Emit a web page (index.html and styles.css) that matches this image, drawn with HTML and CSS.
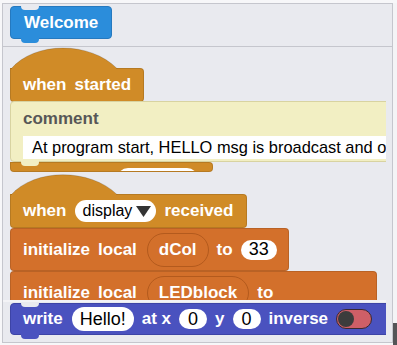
FILE: index.html
```html
<!DOCTYPE html>
<html lang="en">
<head>
    <meta charset="UTF-8">
    <title>Blocks</title>
    <link rel="stylesheet" href="styles.css">
</head>
<body>
    <div class="page">
        <div class="frame">
            <div class="header">
                <div class="block welcome">Welcome</div>
            </div>
            <div class="workspace">
                <div class="stack first">
                    <svg class="cap" width="108" height="22" viewBox="0 0 108 22"><path d="M0.5,22.5 C24,-6 80,-6 107,21.5 L108,22.5 Z" fill="#d08b27" stroke="rgba(0,0,0,0.15)" stroke-width="1"/></svg>
                    <div class="block event hat-body started">
                        <span>when</span>
                        <span>started</span>
                    </div>
                    <div class="comment">
                        <div class="comment-title">comment</div>
                        <div class="comment-text">At program start, HELLO msg is broadcast and once received the display is written</div>
                    </div>
                    <div class="block event tail">
                        <span class="pill tail-pill"></span>
                    </div>
                </div>
                <div class="stack second">
                    <svg class="cap" width="108" height="21" viewBox="0 0 108 21"><path d="M0.5,21.5 C24,-6 80,-6 107,20.5 L108,21.5 Z" fill="#d08b27" stroke="rgba(0,0,0,0.15)" stroke-width="1"/></svg>
                    <div class="block event hat-body received">
                        <span>when</span>
                        <span class="pill drop">display
                            <svg class="arrow" width="15" height="11" viewBox="0 0 15 11"><polygon points="0,0 15,0 7.5,11" fill="#333"/></svg>
                        </span>
                        <span>received</span>
                    </div>
                    <div class="block var init">
                        <span>initialize</span>
                        <span>local</span>
                        <span class="ghost">dCol</span>
                        <span>to</span>
                        <span class="pill num">33</span>
                    </div>
                    <div class="block var init wide">
                        <span>initialize</span>
                        <span>local</span>
                        <span class="ghost">LEDblock</span>
                        <span>to</span>
                    </div>
                </div>
            </div>
            <div class="dock">
                <div class="block write">
                    <span>write</span>
                    <span class="pill hello">Hello!</span>
                    <span>at x</span>
                    <span class="pill num">0</span>
                    <span>y</span>
                    <span class="pill num">0</span>
                    <span>inverse</span>
                    <span class="toggle"><span class="knob"></span></span>
                </div>
            </div>
        </div>
        <div class="side">
            <div class="side-top"></div>
            <div class="side-bottom"></div>
        </div>
    </div>
</body>
</html>
```

FILE: styles.css
```css
*{
    padding: 0;
    margin: 0;
    box-sizing: border-box;
}
body{
    background-color: #f7f7f9;
    font-family: "Liberation Sans", Arial, sans-serif;
    overflow: hidden;
}
.page{
    display: flex;
    padding: 3px 0 0 2px;
    height: 345px;
}
.frame{
    width: 391px;
    height: 340px;
    border: 1px solid #c5c6cd;
    background-color: #e9eaef;
    display: flex;
    flex-direction: column;
}
.side{
    width: 4px;
    display: flex;
    flex-direction: column;
}
.side-top{
    height: 320px;
    background-color: #f4f4f6;
}
.side-bottom{
    flex: 1;
    background-color: #545557;
}

/* top strip with the welcome block */
.header{
    height: 43px;
    padding: 2px 0 0 7px;
    border-bottom: 1px solid #c5c6cd;
}

/* generic block */
.block{
    position: relative;
    display: flex;
    align-items: center;
    gap: 8px;
    color: #ffffff;
    font-size: 17px;
    font-weight: bold;
    border: 1px solid rgba(0,0,0,0.12);
    border-radius: 4px;
    white-space: nowrap;
}
.welcome{
    width: 102px;
    height: 33px;
    padding-left: 13px;
    background-color: #2b8ddb;
    border-color: #2579bf;
}
.welcome::before,
.write::before{
    content: "";
    position: absolute;
    left: 10px;
    top: -1px;
    width: 18px;
    height: 4px;
    background-color: #e9eaef;
    border-radius: 0 0 4px 4px;
}
.welcome::after,
.write::after{
    content: "";
    position: absolute;
    left: 10px;
    bottom: -5px;
    width: 18px;
    height: 5px;
    border-radius: 0 0 4px 4px;
}
.welcome::after{
    background-color: #2b8ddb;
}

/* canvas */
.workspace{
    width: 383px;
    height: 253px;
    overflow: hidden;
    padding-left: 7px;
}
.stack{
    display: flex;
    flex-direction: column;
    align-items: flex-start;
}
.first{
    margin-top: 0;
}
.second{
    margin-top: 2px;
}
.cap{
    display: block;
    margin-bottom: -1px;
    position: relative;
    z-index: 1;
}
.event{
    background-color: #d08b27;
}
.var{
    background-color: #d3702b;
}
.hat-body{
    border-top-left-radius: 0;
    padding-left: 12px;
}
.started{
    width: 134px;
    height: 34px;
}
.received{
    width: 237px;
    height: 34px;
}

/* comment on the first script */
.comment{
    position: relative;
    z-index: 2;
    width: 430px;
    height: 61px;
    margin-top: -1px;
    background-color: #f2efc3;
    border: 1px solid #d8d3a1;
    border-radius: 4px;
    padding-left: 12px;
}
.comment::after{
    content: "";
    position: absolute;
    left: 10px;
    bottom: -5px;
    width: 18px;
    height: 5px;
    background-color: #f2efc3;
    border-radius: 0 0 4px 4px;
}
.comment-title{
    height: 34px;
    line-height: 34px;
    font-size: 17px;
    font-weight: bold;
    color: #575757;
}
.comment-text{
    height: 23px;
    line-height: 23px;
    background-color: #ffffff;
    color: #000000;
    font-size: 16.4px;
    padding-left: 9px;
    white-space: nowrap;
    overflow: hidden;
}
.tail{
    width: 203px;
    height: 10px;
    overflow: hidden;
    align-items: flex-start;
    border-top-left-radius: 0;
}
.tail-pill{
    margin: 5px 0 0 106px;
    width: 81px;
    height: 22px;
}

/* fields */
.pill{
    display: inline-flex;
    align-items: center;
    justify-content: center;
    background-color: #ffffff;
    color: #000000;
    font-weight: normal;
    font-size: 18px;
    border-radius: 11px;
    height: 22px;
    padding: 0 9px;
}
.drop{
    font-size: 16px;
    padding: 0 5px 0 7px;
    gap: 4px;
    width: 81px;
    margin-left: 1px;
}
.arrow{
    margin-top: 1px;
}
.num{
    height: 20px;
    border-radius: 10px;
    padding: 0 9px;
}
.init{
    height: 43px;
    width: 279px;
    padding-left: 12px;
}
.init.wide{
    width: 367px;
}
.ghost{
    height: 34px;
    line-height: 32px;
    padding: 0 11px;
    border: 1px solid #b35a1d;
    border-radius: 17px;
    margin-left: 2px;
}
.init .num{
    padding: 0 8px;
}

/* dragged write block */
.dock{
    flex: 1;
    width: 383px;
    overflow: hidden;
    border-top: 2px solid #f3f3f6;
    padding: 1px 0 0 7px;
}
.write{
    width: 400px;
    height: 32px;
    padding-left: 12px;
    background-color: #4a52bf;
    border-color: #3d44a6;
}
.write::after{
    background-color: #4a52bf;
}
.hello{
    height: 24px;
    border-radius: 12px;
    padding: 0 8px;
    margin-left: 1px;
}
.toggle{
    display: inline-flex;
    align-items: center;
    width: 36px;
    height: 20px;
    border-radius: 10px;
    background-color: #cf5f67;
    border: 1.5px solid #3a2a30;
    padding-left: 1px;
}
.knob{
    width: 16px;
    height: 16px;
    border-radius: 50%;
    background-color: #3c3c3c;
}
```
